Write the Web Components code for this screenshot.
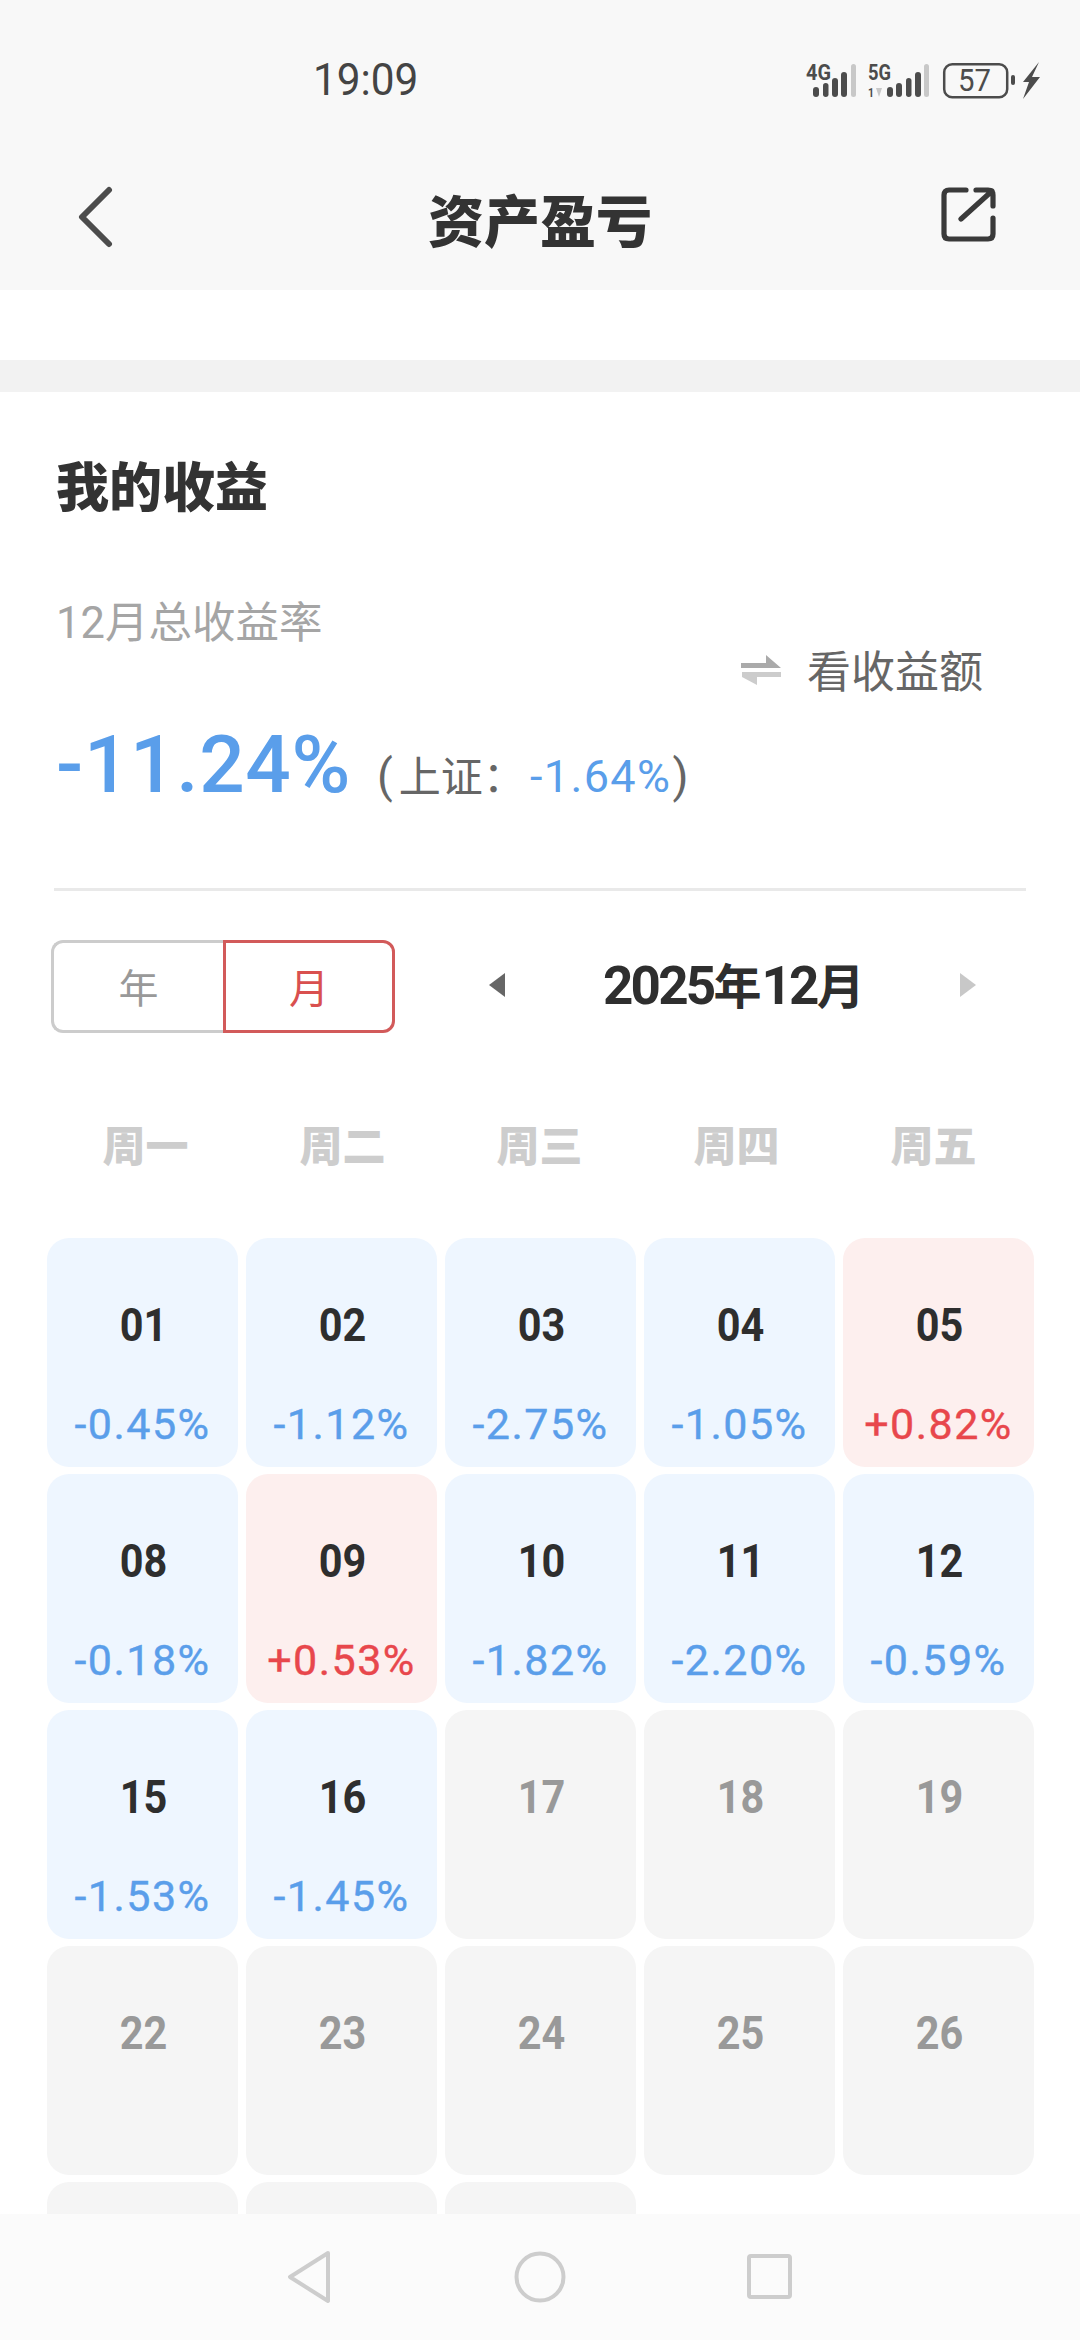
<!DOCTYPE html>
<html lang="zh"><head><meta charset="utf-8"><title>资产盈亏</title>
<style>
html,body{margin:0;padding:0;background:#fff}
body{width:1080px;height:2340px;overflow:hidden;position:relative;font-family:"Noto Sans CJK SC","Noto Sans",sans-serif;color:#333}
</style></head><body>
<app-header></app-header>
<div style="height:70px"></div>
<div style="height:32px;background:#f2f2f2"></div>
<profit-summary></profit-summary>
<period-bar></period-bar>
<week-head></week-head>
<cal-grid>
<cal-cell day="01" val="-0.45%"></cal-cell><cal-cell day="02" val="-1.12%"></cal-cell><cal-cell day="03" val="-2.75%"></cal-cell><cal-cell day="04" val="-1.05%"></cal-cell><cal-cell day="05" val="+0.82%"></cal-cell>
<cal-cell day="08" val="-0.18%"></cal-cell><cal-cell day="09" val="+0.53%"></cal-cell><cal-cell day="10" val="-1.82%"></cal-cell><cal-cell day="11" val="-2.20%"></cal-cell><cal-cell day="12" val="-0.59%"></cal-cell>
<cal-cell day="15" val="-1.53%"></cal-cell><cal-cell day="16" val="-1.45%"></cal-cell><cal-cell day="17"></cal-cell><cal-cell day="18"></cal-cell><cal-cell day="19"></cal-cell>
<cal-cell day="22"></cal-cell><cal-cell day="23"></cal-cell><cal-cell day="24"></cal-cell><cal-cell day="25"></cal-cell><cal-cell day="26"></cal-cell>
<cal-cell day="29"></cal-cell><cal-cell day="30"></cal-cell><cal-cell day="31"></cal-cell>
</cal-grid>
<system-nav></system-nav>
<script>
const CJK='"Noto Sans CJK SC",sans-serif';
function def(name,html){
  customElements.define(name,class extends HTMLElement{
    connectedCallback(){ if(this.shadowRoot) return; const r=this.attachShadow({mode:'open'}); r.innerHTML=typeof html==='function'?html(this):html; }
  });
}
def('app-header',`<style>
:host{display:block;background:#f8f8f8;height:290px;color:#333}
.status{height:146px;position:relative}
.time{position:absolute;left:313px;top:52px;font:400 45px/56px Roboto,sans-serif;color:#444;transform:scaleX(.94);transform-origin:left}
.icons{position:absolute;left:800px;top:50px;overflow:visible}
.nav{display:grid;grid-template-columns:1fr auto 1fr;align-items:center;height:144px;padding:0 78px;box-sizing:border-box}
h1{margin:0;font:900 56px/64px ${CJK};color:#333}
.nav svg{display:block}
.r{justify-self:end;margin:-8px 4px 0 0}
.l{margin-top:-3px}
</style><div class="status"><div class="time">19:09</div>
<svg class="icons" width="240" height="52" viewBox="0 0 240 52">
<g fill="#4c4c4c" font-family="Roboto,sans-serif" font-weight="700">
<text x="6" y="30" font-size="22" textLength="25" lengthAdjust="spacingAndGlyphs">4G</text>
<text x="68" y="30" font-size="22" textLength="23" lengthAdjust="spacingAndGlyphs">5G</text>
<text x="68" y="47" font-size="13" textLength="6" lengthAdjust="spacingAndGlyphs">1</text>
<text x="158" y="41" font-size="31" font-weight="400" textLength="33" lengthAdjust="spacingAndGlyphs">57</text>
<rect x="13" y="37" width="6" height="10" rx="3"/><rect x="23" y="33" width="5.5" height="14" rx="2.75"/><rect x="32" y="28" width="6" height="19" rx="3"/><rect x="41" y="22" width="6" height="25" rx="3"/>
<rect x="87" y="37" width="6" height="10" rx="3"/><rect x="96" y="33" width="6" height="14" rx="3"/><rect x="106" y="28" width="5.5" height="19" rx="2.75"/><rect x="115" y="22" width="6" height="25" rx="3"/>
<rect x="211" y="25" width="4" height="10" rx="2"/>
<path d="M239 12 L223 32 L229 32 L223 49 L240 27 L232 27 Z"/>
</g>
<rect x="51" y="14" width="5" height="33" rx="2.5" fill="#c8c8c8"/><rect x="124" y="14" width="5" height="33" rx="2.5" fill="#c8c8c8"/>
<path d="M76 38 h6 l-3 9 z" fill="#c8c8c8"/>
<rect x="144.2" y="14.2" width="63" height="33" rx="8" fill="none" stroke="#4c4c4c" stroke-width="2.5"/>
</svg></div>
<div class="nav">
<svg class="l" width="40" height="62" viewBox="0 0 40 62"><path d="M31 4 L4 31 L31 58" fill="none" stroke="#4c4c4c" stroke-width="6" stroke-linecap="round" stroke-linejoin="round"/></svg>
<h1>资产盈亏</h1>
<svg class="r" width="60" height="60" viewBox="0 0 60 60"><path d="M30 8 H13 Q8 8 8 13 V52 Q8 57 13 57 H52 Q57 57 57 52 V36 M40 8 H52 Q57 8 57 13 V24 M56 9 L25 37" transform="translate(-2 -2)" fill="none" stroke="#3a3a3a" stroke-width="5.2" stroke-linecap="round" stroke-linejoin="round"/></svg>
</div>`);
def('profit-summary',`<style>
:host{display:block;position:relative;height:498px}
.in{padding:59px 36px 0 56px;box-sizing:border-box}
h2{margin:0;font:900 53px/66px ${CJK};color:#333}
.sub{margin-top:75px;font:400 43.5px/56px ${CJK};color:#a5a5a5}
.sub span{font-family:Roboto,sans-serif}
.row{display:flex;align-items:baseline;margin-top:68px;height:100px}
.big{font:500 80px/90px Roboto,sans-serif;color:#5a9eea;letter-spacing:.7px}
.ref{margin-left:26px;font:400 42px/56px ${CJK};color:#666;white-space:nowrap;display:flex;align-items:baseline}
.ref i{font:400 46px/56px Roboto,sans-serif;margin-right:6px}
.ref i.e{margin:0 0 0 1px}
.ref em{font-style:normal;margin-right:5px}
.ref b{font:400 45px/56px Roboto,sans-serif;color:#5a9eea;letter-spacing:1.4px}
.sw{position:absolute;left:740px;top:247px;display:flex;align-items:center;gap:25px;font:400 44px/60px ${CJK};color:#666}
.sw svg{margin-top:2px}
hr{position:absolute;left:54px;right:54px;top:496px;margin:0;border:0;height:3px;background:#e9e9e9}
</style><div class="in">
<h2>我的收益</h2>
<div class="sub"><span>12</span>月总收益率</div>
<div class="row"><div class="big">-11.24%</div><div class="ref"><i>(</i><span>上证</span><em>：</em><b>-1.64%</b><i class="e">)</i></div></div>
</div>
<div class="sw"><svg width="42" height="32" viewBox="0 0 42 32"><path d="M1 9 H26 V1 L41 14 H1 Z" fill="#aaa"/><path d="M2 18 H41 V23 H17 V31 L2 23 Z" fill="#ccc"/></svg><span>看收益额</span></div>
<hr>`);
def('period-bar',`<style>
:host{display:block;position:relative;height:167px}
.seg{position:absolute;left:51px;top:50px;display:flex;height:93px;font:400 40px/87px ${CJK};text-align:center}
.a,.b{box-sizing:border-box;height:93px}
.a{border:3px solid #ccc;border-right:0;border-radius:12px 0 0 12px;color:#999;width:172px}
.b{border:3px solid #d25a5a;border-radius:0 12px 12px 0;color:#d9504f;width:172px}
.ttl{position:absolute;left:603px;top:55px;font:700 48px/76px ${CJK};color:#2e2e2e;white-space:nowrap}
.ttl span{font:700 53px/76px Roboto,sans-serif;letter-spacing:-2.8px}
svg{position:absolute;top:83px}
</style>
<div class="seg"><div class="a">年</div><div class="b">月</div></div>
<svg style="left:488px" width="18" height="24" viewBox="0 0 18 24"><path d="M17 0V24L1 12Z" fill="#666"/></svg>
<div class="ttl"><span>2025</span>年<span>12</span>月</div>
<svg style="left:959px" width="18" height="24" viewBox="0 0 18 24"><path d="M1 0V24L17 12Z" fill="#c8c8c8"/></svg>`);
def('week-head',`<style>
:host{display:grid;grid-template-columns:repeat(5,197px);padding-left:47px;height:112px;box-sizing:border-box;font:900 43px/60px ${CJK};color:#cdcdcd;text-align:center}
div{padding-top:56px}
</style><div>周一</div><div>周二</div><div>周三</div><div>周四</div><div>周五</div>`);
def('cal-grid',`<style>
:host{display:grid;grid-template-columns:repeat(5,191px);column-gap:8px;row-gap:7px;grid-auto-rows:229px;padding:69px 0 0 47px}
</style><slot></slot>`);
def('cal-cell',h=>{
 const v=h.getAttribute('val'), d=h.getAttribute('day');
 const k=!v?'off':v[0]==='+'?'up':'dn';
 return `<style>
:host{display:flex;flex-direction:column;align-items:center;border-radius:22px;background:${k==='off'?'#f5f5f5':k==='up'?'#fdefee':'#eef6ff'}}
.d{margin:64px 0 0 2px;font:700 46px/46px Roboto,sans-serif;color:${k==='off'?'#999':'#2e2e2e'};transform:scaleX(.9)}
.v{margin-top:52px;font:400 43px/48px Roboto,sans-serif;color:${k==='up'?'#e8474c':'#5a9eea'};letter-spacing:1.5px;-webkit-text-stroke:.4px currentColor}
</style><div class="d">${d}</div>${v?`<div class="v">${v}</div>`:''}`;
});
def('system-nav',`<style>
:host{position:absolute;left:0;right:0;top:2214px;height:126px;background:#fbfbfb;display:block}
svg{position:absolute}
</style>
<svg style="left:286px;top:36px" width="46" height="54" viewBox="0 0 46 54"><path d="M42 3 L4 27 L42 51 Z" fill="none" stroke="#cdcdcd" stroke-width="4" stroke-linejoin="round"/></svg>
<svg style="left:514px;top:37px" width="52" height="52" viewBox="0 0 52 52"><circle cx="26" cy="26" r="23.5" fill="none" stroke="#cdcdcd" stroke-width="4"/></svg>
<svg style="left:747px;top:40px" width="46" height="46" viewBox="0 0 46 46"><rect x="2" y="2" width="41" height="41" rx="2" fill="none" stroke="#cdcdcd" stroke-width="4"/></svg>`);
</script></body></html>
